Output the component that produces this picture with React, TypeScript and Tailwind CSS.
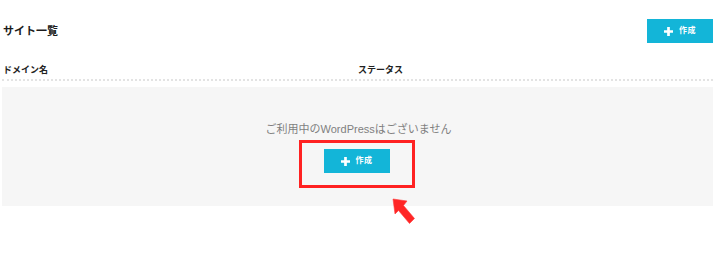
import React from 'react';

const font = { fontFamily: '"Liberation Sans", "Noto Sans CJK JP", sans-serif' };

const PlusIcon: React.FC<{ className?: string }> = ({ className }) => (
  <svg viewBox="0 0 10 10" className={className} aria-hidden="true">
    <path d="M5 0v10M0 5h10" stroke="currentColor" strokeWidth="3" />
  </svg>
);

const CreateButton: React.FC = () => (
  <button className="flex h-6 w-[66px] items-center justify-center gap-[6px] bg-[#13b5d8] text-white">
    <PlusIcon className="h-[9px] w-[9px]" />
    <span className="text-[8px] font-bold leading-none tracking-[0.5px]">作成</span>
  </button>
);

const Arrow: React.FC = () => (
  <svg viewBox="0 0 30 30" className="absolute left-[390px] top-[197px] h-[30px] w-[30px]" aria-hidden="true">
    <polygon
      points="3,2 17,4 13.5,8.5 24.5,21.5 19.5,26.5 8.5,13.5 5,17"
      fill="#ff2626"
      stroke="#ff3b3b"
      strokeWidth="0.6"
      strokeLinejoin="round"
    />
  </svg>
);

const App: React.FC = () => {
  return (
    <div className="relative h-[261px] w-[720px] overflow-hidden bg-white" style={font}>
      <div className="ml-[2px] w-[711px] pt-[19px]">
        <div className="flex h-6 items-center justify-between">
          <h2 className="pl-[1px] text-[11px] font-bold leading-none text-[#1c1c1c]">サイト一覧</h2>
          <CreateButton />
        </div>

        <div className="mt-[20px] grid h-[18px] grid-cols-2 items-center border-b-2 border-dotted border-[#e3e3e3] pl-[1px] text-[9px] font-bold text-[#222]">
          <span>ドメイン名</span>
          <span>ステータス</span>
        </div>

        <div className="mt-[6px] flex h-[119px] flex-col items-center bg-[#f6f6f6] pt-[35px]">
          <p className="pl-[2px] text-[11px] leading-[14px] text-[#7f7f7f]">ご利用中のWordPressはございません</p>
          <div className="ml-[-2px] mt-[4px] border-[3px] border-[#ff2222] px-[22px] pb-[12px] pt-[6px]">
            <CreateButton />
          </div>
        </div>
      </div>
      <Arrow />
    </div>
  );
};

export default App;
